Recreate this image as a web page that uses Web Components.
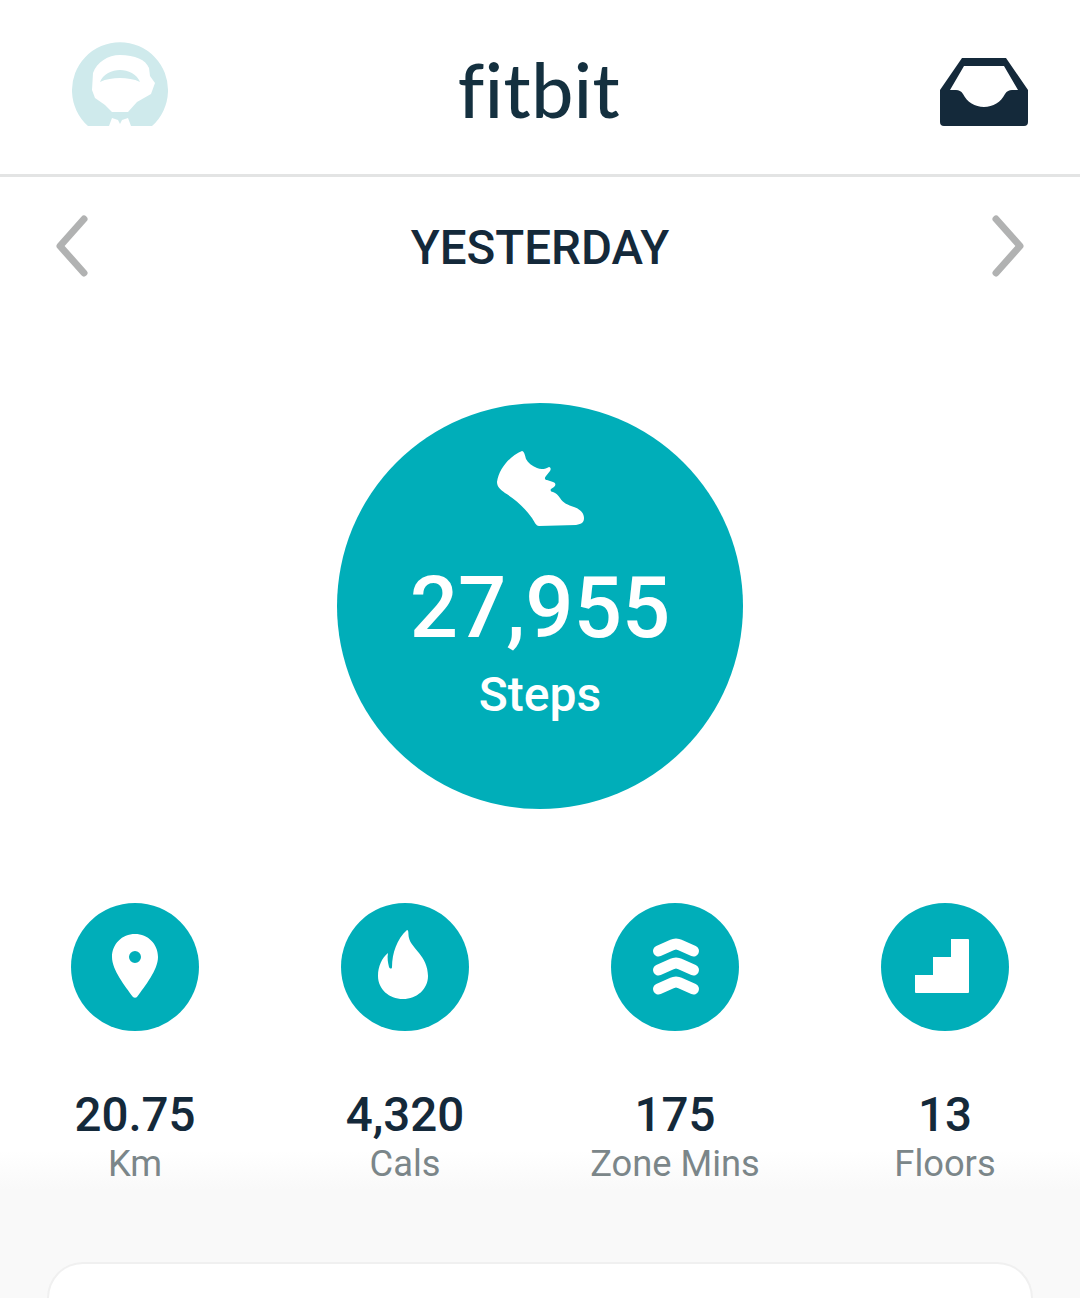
<!DOCTYPE html>
<html lang="en">
<head>
<meta charset="utf-8">
<title>fitbit</title>
<style>
  html, body { margin: 0; padding: 0; }
  body {
    height: 1298px;
    overflow: hidden;
    font-family: Roboto, "Liberation Sans", sans-serif;
    color: #14303f;
    background: linear-gradient(#fff 1150px, #f9f9f9 1190px);
  }
</style>
</head>
<body>
<app-header></app-header>
<date-nav>YESTERDAY</date-nav>
<steps-ring value="27,955" label="Steps"></steps-ring>
<stat-row>
  <stat-item icon="pin" value="20.75" label="Km"></stat-item>
  <stat-item icon="flame" value="4,320" label="Cals"></stat-item>
  <stat-item icon="zone" value="175" label="Zone Mins"></stat-item>
  <stat-item icon="stairs" value="13" label="Floors"></stat-item>
</stat-row>
<summary-card></summary-card>

<script>
class AppHeader extends HTMLElement {
  constructor() {
    super();
    this.attachShadow({ mode: 'open' });
    this.shadowRoot.innerHTML = `
      <style>
        :host {
          display: grid;
          grid-template-columns: 1fr auto 1fr;
          align-items: center;
          box-sizing: border-box;
          height: 177px;
          padding: 0 52px 0 72px;
          border-bottom: 3px solid #e3e4e4;
        }
        .logo {
          font: 500 75px/1 Lato, sans-serif;
          color: #14303f;
          letter-spacing: 0.5px;
          margin: 4px 22px 0 0;
        }
        svg { display: block; }
        .avatar { margin-bottom: 6px; }
        .inbox { justify-self: end; margin-top: 10px; }
      </style>
      <svg class="avatar" width="96" height="88" viewBox="72 40 96 88">
        <path fill="#cfeaec" d="M88 126A48 48 0 1 1 152 126H131L128 118 122 120 120 124 118 120 112 118 109 126Z"/>
        <path fill="#fff" d="M120 55C135 55 146 60 149 68L150 76 155 83 151 94 137 102 128 112H112L105 105 95 98 92 90 93 73C97 62 108 55 120 55Z"/>
        <path fill="#cfeaec" d="M100 82C103 74 112 70 120 70C128 70 137 74 140 82C134 79 127 78 120 78C113 78 106 79 100 82Z"/>
      </svg>
      <span class="logo">fitbit</span>
      <svg class="inbox" width="88" height="68" viewBox="940 58 88 68">
        <path fill="#14293a" fill-rule="evenodd" d="M962 58h44l22 32v32a4 4 0 0 1-4 4h-80a4 4 0 0 1-4-4V90zM964 66l-14 24h6c3 0 5 1 7 4 4 8 12 13 21 13s17-5 21-13c2-3 4-4 7-4h6l-14-24z"/>
      </svg>
    `;
  }
}

class DateNav extends HTMLElement {
  constructor() {
    super();
    this.attachShadow({ mode: 'open' });
    this.shadowRoot.innerHTML = `
      <style>
        :host {
          display: flex;
          align-items: center;
          justify-content: space-between;
          box-sizing: border-box;
          height: 140px;
          padding: 0 52px 2px 52px;
          font: 500 47.5px/1 Roboto, sans-serif;
          color: #14293a;
        }
        svg { display: block; }
        span { margin-top: 6px; }
      </style>
      <svg width="40" height="70" viewBox="52 211 40 70"><path d="M84 219 60 246l24 27" fill="none" stroke="#b1b2b2" stroke-width="7" stroke-linecap="round" stroke-linejoin="round"/></svg>
      <span><slot></slot></span>
      <svg width="40" height="70" viewBox="988 211 40 70"><path d="M996 219l24 27-24 27" fill="none" stroke="#b1b2b2" stroke-width="7" stroke-linecap="round" stroke-linejoin="round"/></svg>
    `;
  }
}

class StepsRing extends HTMLElement {
  constructor() {
    super();
    this.attachShadow({ mode: 'open' });
    this.shadowRoot.innerHTML = `
      <style>
        :host {
          display: block;
          box-sizing: border-box;
          width: 406px;
          height: 406px;
          margin: 86px auto 94px;
          border-radius: 50%;
          background: #00aeb9;
          color: #fff;
          text-align: center;
          padding-top: 46px;
        }
        svg { display: block; margin: 0 auto; }
        .value { font: 500 85px/1 Roboto, sans-serif; margin-top: 39px; }
        .label { font: 500 48px/1 Roboto, sans-serif; margin-top: 20px; }
      </style>
      <svg width="90" height="78" viewBox="495 449 90 78">
        <path fill="#fff" d="M522 451C524 451 525 455 526 459C528 463 532 466 537 468C541 470 546 469 549 467C551 467 551 470 550 471L546 476C544 478 545 480 547 480L553 482C556 483 556 485 554 487L551 489C550 490 551 492 553 492C556 493 558 495 560 498C563 503 568 505 574 507C580 509 584 513 584 518C584 522 582 524 576 525L539 526C536 526 534 521 532 518C524 507 515 499 505 493C501 490 497 487 497 482C499 468 510 456 522 451Z"/>
      </svg>
      <div class="value"></div>
      <div class="label"></div>
    `;
  }
  connectedCallback() {
    this.shadowRoot.querySelector('.value').textContent = this.getAttribute('value');
    this.shadowRoot.querySelector('.label').textContent = this.getAttribute('label');
  }
}

class StatRow extends HTMLElement {
  constructor() {
    super();
    this.attachShadow({ mode: 'open' });
    this.shadowRoot.innerHTML = `
      <style>
        :host { display: grid; grid-template-columns: repeat(4, 270px); }
      </style>
      <slot></slot>
    `;
  }
}

const STAT_ICONS = {
  pin: `<path fill="#fff" fill-rule="evenodd" d="M135 934C148 934 158 944 158 957C158 970 145 986 137 997C136 998 134 998 133 997C125 986 112 970 112 957C112 944 122 934 135 934ZM135 951a6 6 0 1 0 0 12 6 6 0 0 0 0-12Z"/>`,
  flame: `<path fill="#fff" d="M407 930C409 930 408 934 409 938C411 948 428 956 428 976C428 989 417 999 403 999C389 999 378 989 378 976C378 966 382 958 388 953C387 958 388 963 389 967C390 969 392 969 392 967C392 953 397 939 407 930Z"/>`,
  zone: `<g fill="none" stroke="#fff" stroke-width="11" stroke-linecap="round" stroke-linejoin="round"><path d="M658.500 951 672 945Q676 943 680 945L693.500 951"/><path d="M658.500 970 672 964Q676 962 680 964L693.500 970"/><path d="M658.500 989 672 983Q676 981 680 983L693.500 989"/></g>`,
  stairs: `<path fill="#fff" d="M951 939h17a1 1 0 0 1 1 1v52a1 1 0 0 1-1 1h-52a1 1 0 0 1-1-1v-17h18v-18h18z"/>`
};
const STAT_BOXES = { pin: '71', flame: '341', zone: '611', stairs: '881' };

class StatItem extends HTMLElement {
  constructor() {
    super();
    this.attachShadow({ mode: 'open' });
    this.shadowRoot.innerHTML = `
      <style>
        :host {
          display: flex;
          flex-direction: column;
          align-items: center;
        }
        .disc { width: 128px; height: 128px; border-radius: 50%; background: #00aeb9; }
        svg { display: block; }
        .value { font: 500 47.5px/1 Roboto, sans-serif; color: #14293a; margin-top: 61px; }
        .label { font: 400 36.300px/1 Roboto, sans-serif; color: #7b8689; margin-top: 6px; }
      </style>
      <div class="disc"></div>
      <div class="value"></div>
      <div class="label"></div>
    `;
  }
  connectedCallback() {
    const icon = this.getAttribute('icon');
    this.shadowRoot.querySelector('.disc').innerHTML =
      `<svg width="128" height="128" viewBox="${STAT_BOXES[icon]} 903 128 128">${STAT_ICONS[icon]}</svg>`;
    this.shadowRoot.querySelector('.value').textContent = this.getAttribute('value');
    this.shadowRoot.querySelector('.label').textContent = this.getAttribute('label');
  }
}

class SummaryCard extends HTMLElement {
  constructor() {
    super();
    this.attachShadow({ mode: 'open' });
    this.shadowRoot.innerHTML = `
      <style>
        :host {
          display: block;
          box-sizing: border-box;
          height: 36px;
          margin: 80.200px 47px 0 47px;
          background: #fff;
          border: 2px solid #f0f0f0;
          border-bottom: 0;
          border-radius: 40px 40px 0 0;
        }
      </style>
    `;
  }
}

customElements.define('app-header', AppHeader);
customElements.define('date-nav', DateNav);
customElements.define('steps-ring', StepsRing);
customElements.define('stat-row', StatRow);
customElements.define('stat-item', StatItem);
customElements.define('summary-card', SummaryCard);
</script>
</body>
</html>
